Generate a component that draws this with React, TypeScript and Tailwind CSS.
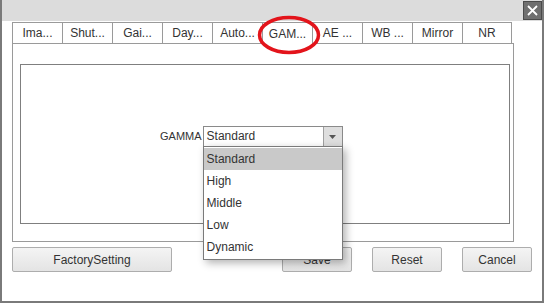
const tabs = ['Ima...', 'Shut...', 'Gai...', 'Day...', 'Auto...', 'GAM...', 'AE ...', 'WB ...', 'Mirror', 'NR'];
const options = ['Standard', 'High', 'Middle', 'Low', 'Dynamic'];

const Btn = ({ label, className = '' }: { label: string; className?: string }) => (
  <button
    className={`h-[25px] rounded-[2px] border border-[#adadad] bg-gradient-to-b from-[#f4f4f4] to-[#e4e4e4] text-[12px] text-[#333] ${className}`}
  >
    {label}
  </button>
);

const App = () => {
  return (
    <div
      className="relative w-[544px] h-[303px] bg-white border-x-2 border-b-2 border-[#7a7a7a] overflow-hidden"
      style={{ fontFamily: '"Liberation Sans", Arial, sans-serif' }}
    >
      {/* title bar */}
      <div className="h-[21px] bg-[#dcdcdc] flex justify-end items-start -mx-[2px]">
        <div className="mt-[1px] mr-[2px] w-[19px] h-[19px] bg-[#6f6f6f] border border-[#4a4a4a] flex items-center justify-center">
          <svg width="11" height="11" viewBox="0 0 11 11">
            <path d="M1 1L10 10M10 1L1 10" stroke="#fff" strokeWidth="1.8" />
          </svg>
        </div>
      </div>

      <div className="pl-[10px] pt-[1px]">
        {/* tabs */}
        <div className="flex w-[502px]">
          {tabs.map((t, i) => (
            <div
              key={t}
              className={`w-[50px] h-[22px] flex items-center justify-center text-[12px] text-[#333] border-t border-l border-[#9a9a9a] ${
                i === tabs.length - 1 ? 'border-r' : ''
              } ${i === 5 ? 'bg-white' : 'border-b bg-white'}`}
            >
              {t}
            </div>
          ))}
          <div className="flex-1 border-b border-[#9a9a9a]" />
        </div>

        {/* tab panel */}
        <div className="w-[502px] h-[198px] border-x border-b border-[#9a9a9a] pl-[7px] pt-[20px] pr-[3px]">
          <div className="h-[160px] border border-[#7f7f7f] pt-[61px] pl-[139px]">
            <div className="flex items-center gap-[1px]">
              <span className="text-[11px] text-[#333]">GAMMA</span>
              <div className="relative">
                <div className="w-[140px] h-[21px] border border-[#8a8a8a] flex bg-white">
                  <span className="flex-1 pl-[3px] text-[12px] leading-[19px] text-[#333]">Standard</span>
                  <div className="w-[19px] bg-[#dedede] border-l border-[#a0a0a0] flex items-center justify-center">
                    <svg width="7" height="4" viewBox="0 0 7 4">
                      <path d="M0 0H7L3.5 4Z" fill="#555" />
                    </svg>
                  </div>
                </div>
                <div className="absolute left-0 top-[20px] z-10 w-[140px] border border-[#7a7a7a] bg-white py-[1px] shadow-[3px_3px_8px_rgba(0,0,0,0.3)]">
                  {options.map((o, i) => (
                    <div
                      key={o}
                      className={`h-[22px] pl-[3px] text-[12px] leading-[22px] text-[#333] ${i === 0 ? 'bg-[#c9c9c9]' : ''}`}
                    >
                      {o}
                    </div>
                  ))}
                </div>
              </div>
            </div>
          </div>
        </div>

        {/* buttons */}
        <div className="flex mt-[5px]">
          <Btn label="FactorySetting" className="w-[160px]" />
          <Btn label="Save" className="w-[70px] ml-[110px]" />
          <Btn label="Reset" className="w-[70px] ml-[20px]" />
          <Btn label="Cancel" className="w-[70px] ml-[20px]" />
        </div>
      </div>

      {/* red annotation ellipse */}
      <svg className="absolute left-[255px] top-[15px]" width="64" height="40" viewBox="0 0 64 40">
        <ellipse cx="32" cy="20" rx="29.5" ry="17.5" fill="none" stroke="#e3141b" strokeWidth="3.5" />
      </svg>
    </div>
  );
};

export default App;
